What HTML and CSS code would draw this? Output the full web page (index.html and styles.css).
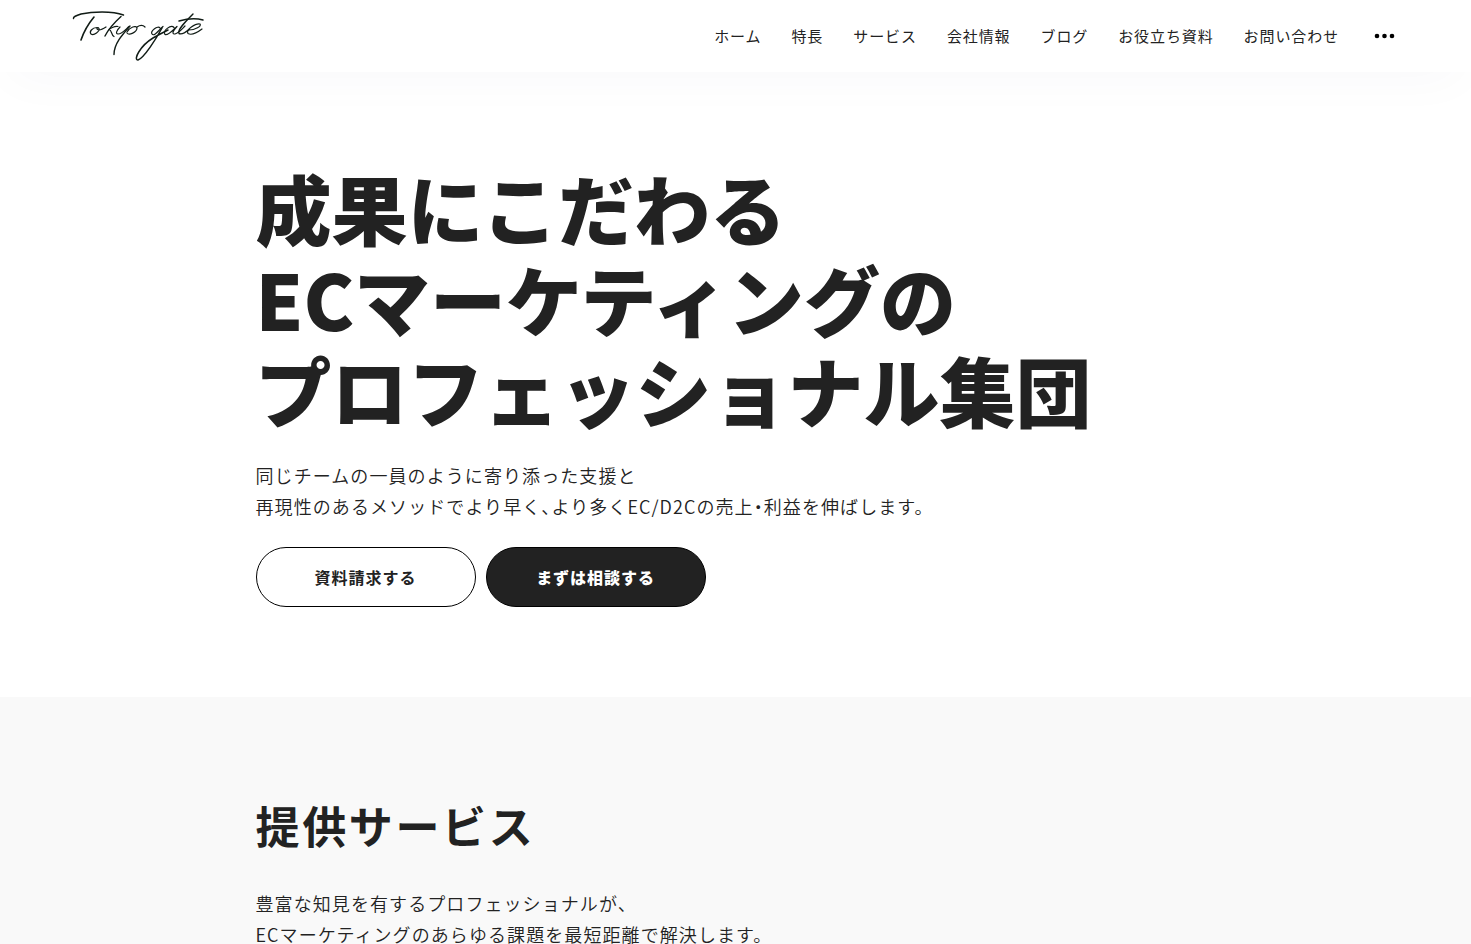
FILE: index.html
```html
<!DOCTYPE html>
<html lang="ja">
<head>
    <meta charset="UTF-8">
    <meta name="viewport" content="width=device-width, initial-scale=1.0">
    <title>Tokyo gate</title>
    <link rel="stylesheet" href="styles.css">
</head>
<body>
    <header class="header">
        <a class="logo" href="#" aria-label="Tokyo gate">
            <svg width="132" height="52" viewBox="0 0 132 52" fill="none" stroke="#111c16" stroke-width="1.2" stroke-linecap="round" stroke-linejoin="round">
                <path stroke-width="1.5" d="M1.500 8.500C1 7 4 5.500 9 4C20 1.500 40 0.500 51.500 5"/>
                <path stroke-width="1.6" d="M22 7C17 13 12 21 9 30"/>
                <path d="M25 17.500C20 17.500 17 22 19 24C22 26 28 21 27 18.500C26 17 24 18 25.500 19.500C28 21 31 19 34 17"/>
                <path stroke-width="1.4" d="M49 6.500C43 12 36 20 33 26"/>
                <path d="M46 16.500C42 16 38 18.500 37 19.500C40 20 39 25 42 26.500"/>
                <path d="M48 17C45 20 43 24 46 24C50 24 54 19 57 16.500"/>
                <path stroke-width="1.4" d="M58 16C50 25 42 34 42 44.500"/>
                <path d="M55 22C58 17 64 15 65 18C65 22 57 26 55 23M65 17C68 15 71 15 73 17"/>
                <path d="M88 18C86 15 78 21 80 24C82 27 87 20 91 16.500"/>
                <path stroke-width="1.5" d="M90 18C84 29 72 48 66 50C61 50 68 36 81 28C88 24 92 22 96 20"/>
                <path d="M102 17.500C99 14 90 21 93 24.500C96 26 101 20 105 16.500C100 22 100 24 103 24C107 23 110 19 113 16"/>
                <path stroke-width="1.4" d="M121 4C114 11 105 20 107 23.500C110 25 114 22 117 19.500"/>
                <path stroke-width="1.4" d="M107 11C114 9 124 8 131 10"/>
                <path d="M117 20C123 20 130 16 128 14C124 13 113 20 116 23.500C120 26 126 22 130 19"/>
            </svg>
        </a>
        <nav class="nav">
            <a href="#">ホーム</a>
            <a href="#">特長</a>
            <a href="#">サービス</a>
            <a href="#">会社情報</a>
            <a href="#">ブログ</a>
            <a href="#">お役立ち資料</a>
            <a href="#">お問い合わせ</a>
            <button class="more" type="button" aria-label="メニュー">
                <svg width="22" height="6" viewBox="0 0 22 6" fill="#000">
                    <circle cx="4" cy="3" r="2.300"/>
                    <circle cx="11.500" cy="3" r="2.300"/>
                    <circle cx="19" cy="3" r="2.300"/>
                </svg>
            </button>
        </nav>
    </header>
    <main>
        <section class="hero">
            <div class="container">
                <h1>成果にこだわる<br>ECマーケティングの<br>プロフェッショナル集団</h1>
                <p class="text">同じチームの一員のように寄り添った支援と<br>再現性のあるメソッドでより早く、より多くEC/D2Cの売上・利益を伸ばします。</p>
                <div class="buttons">
                    <a class="btn" href="#">資料請求する</a>
                    <a class="btn btn-dark" href="#">まずは相談する</a>
                </div>
            </div>
        </section>
        <section class="services">
            <div class="container">
                <h2>提供サービス</h2>
                <p class="text">豊富な知見を有するプロフェッショナルが、<br>ECマーケティングのあらゆる課題を最短距離で解決します。</p>
            </div>
        </section>
    </main>
</body>
</html>
```

FILE: styles.css
```css
* {
    box-sizing: border-box;
}

body {
    margin: 0;
    font-family: "Noto Sans CJK JP", sans-serif;
    font-feature-settings: "halt";
    color: #222;
    background: #fff;
}

a {
    color: inherit;
    text-decoration: none;
}

.header {
    position: relative;
    display: flex;
    justify-content: space-between;
    align-items: center;
    height: 72px;
    padding: 0 72px;
    background: #fff;
    box-shadow: 0 16px 50px -10px rgba(0, 20, 80, 0.03);
}

.logo svg {
    display: block;
}

.nav {
    display: flex;
    align-items: center;
    gap: 30px;
    font-size: 15px;
    font-weight: 400;
    line-height: 24px;
    letter-spacing: 0.06em;
}

.more {
    display: flex;
    padding: 8px 4px;
    border: 0;
    background: none;
    cursor: pointer;
}

.container {
    max-width: 960px;
    margin: 0 auto;
}

.hero {
    padding: 90px 0;
}

h1 {
    margin: 0 0 25px;
    font-size: 76px;
    font-weight: 900;
    line-height: 91px;
}

.text {
    margin: 0;
    font-size: 18px;
    font-weight: 350;
    line-height: 31px;
    letter-spacing: 0.06em;
}

.buttons {
    display: flex;
    gap: 10px;
    margin-top: 25px;
}

.btn {
    display: flex;
    justify-content: center;
    align-items: center;
    width: 220px;
    height: 60px;
    border: 1px solid #000;
    border-radius: 30px;
    font-size: 16px;
    font-weight: 700;
    letter-spacing: 0.06em;
}

.btn-dark {
    background: #222;
    color: #fff;
    font-weight: 900;
}

.services {
    padding: 98px 0;
    background: #f9f9f9;
}

h2 {
    margin: 0 0 33px;
    font-size: 44px;
    font-weight: 700;
    line-height: 60px;
    letter-spacing: 0.06em;
}
```
